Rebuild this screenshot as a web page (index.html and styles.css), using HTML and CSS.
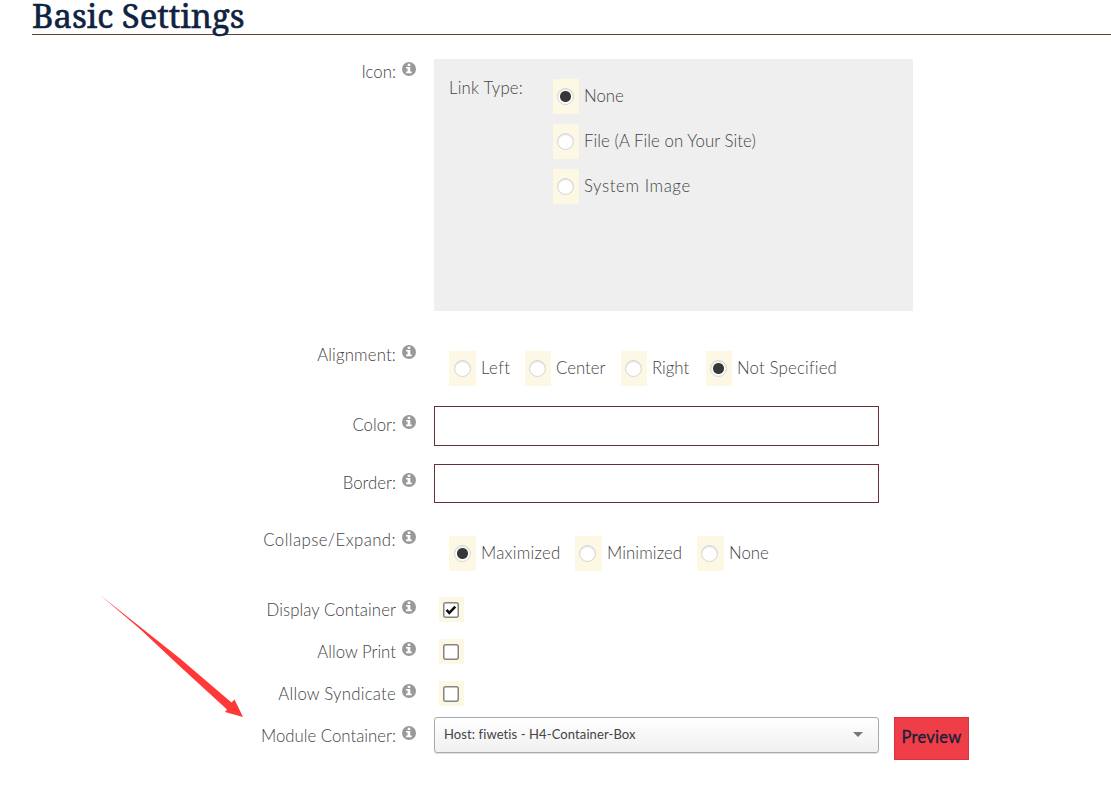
FILE: index.html
```html
<!DOCTYPE html>
<html lang="en">
<head>
<meta charset="utf-8">
<title>Basic Settings</title>
<link rel="stylesheet" href="styles.css">
</head>
<body>
<svg class="defs" width="0" height="0">
  <symbol id="info" viewBox="0 0 14 14"><circle cx="7" cy="7" r="7" fill="#999"/><path d="M5.7 1.8h2.6v2.3H5.7zM4 5h4.3v4.6h1.4v1.7H4V9.6h1.6V6.6H4z" fill="#fff"/></symbol>
</svg>
<h2 class="title"><span>Basic Settings</span></h2>
<form class="form">
  <div class="row row-icon">
    <div class="label"><span class="t-icon">Icon:</span><svg class="info"><use href="#info"/></svg></div>
    <div class="panel">
      <span class="link-type">Link Type:</span>
      <div class="stack">
        <label class="opt"><i class="tile"><b class="radio on"></b></i><span class="t-none">None</span></label>
        <label class="opt"><i class="tile"><b class="radio"></b></i><span class="t-file">File (A File on Your Site)</span></label>
        <label class="opt"><i class="tile"><b class="radio"></b></i><span class="t-system">System Image</span></label>
      </div>
    </div>
  </div>
  <div class="row row-align">
    <div class="label"><span class="t-alignment">Alignment:</span><svg class="info"><use href="#info"/></svg></div>
    <div class="options">
      <label class="opt w-left"><i class="tile"><b class="radio"></b></i><span class="t-left">Left</span></label>
      <label class="opt w-center"><i class="tile narrow"><b class="radio"></b></i><span class="t-center">Center</span></label>
      <label class="opt w-right"><i class="tile narrow"><b class="radio"></b></i><span class="t-right">Right</span></label>
      <label class="opt"><i class="tile narrow"><b class="radio on"></b></i><span class="t-not">Not Specified</span></label>
    </div>
  </div>
  <div class="row row-color">
    <div class="label low"><span class="t-color">Color:</span><svg class="info"><use href="#info"/></svg></div>
    <input class="field field-color" type="text">
  </div>
  <div class="row row-border">
    <div class="label low"><span class="t-border">Border:</span><svg class="info"><use href="#info"/></svg></div>
    <input class="field" type="text">
  </div>
  <div class="row row-collapse">
    <div class="label"><span class="t-collapse">Collapse/Expand:</span><svg class="info"><use href="#info"/></svg></div>
    <div class="options">
      <label class="opt w-max"><i class="tile"><b class="radio on"></b></i><span class="t-max">Maximized</span></label>
      <label class="opt w-min"><i class="tile shift"><b class="radio"></b></i><span class="t-min">Minimized</span></label>
      <label class="opt"><i class="tile shift"><b class="radio"></b></i><span class="t-none">None</span></label>
    </div>
  </div>
  <div class="row row-check">
    <div class="label"><span class="t-display">Display Container</span><svg class="info"><use href="#info"/></svg></div>
    <div class="check-tile"><svg class="check" viewBox="0 0 16 16"><rect x=".75" y=".75" width="14.5" height="14.5" rx="2" fill="#fff" stroke="#858585" stroke-width="1.5"/><path d="M3.5 7.8l2.8 3 6-6.1" fill="none" stroke="#111" stroke-width="2.6"/></svg></div>
  </div>
  <div class="row row-check">
    <div class="label"><span class="t-print">Allow Print</span><svg class="info"><use href="#info"/></svg></div>
    <div class="check-tile"><svg class="check" viewBox="0 0 16 16"><rect x=".75" y=".75" width="14.5" height="14.5" rx="2" fill="#fff" stroke="#858585" stroke-width="1.5"/></svg></div>
  </div>
  <div class="row row-syndicate">
    <div class="label"><span class="t-syndicate">Allow Syndicate</span><svg class="info"><use href="#info"/></svg></div>
    <div class="check-tile"><svg class="check" viewBox="0 0 16 16"><rect x=".75" y=".75" width="14.5" height="14.5" rx="2" fill="#fff" stroke="#858585" stroke-width="1.5"/></svg></div>
  </div>
  <div class="row">
    <div class="label low"><span class="t-module">Module Container:</span><svg class="info"><use href="#info"/></svg></div>
    <div class="select"><span class="t-host">Host: fiwetis - H4-Container-Box</span><svg class="caret" viewBox="0 0 10 5"><path d="M0 0h10L5 5z" fill="#777"/></svg></div>
    <button class="preview" type="button"><span>Preview</span></button>
  </div>
</form>
<svg class="arrow" viewBox="0 0 144 123"><path d="M0 0L80 63.5 131.5 107.5 134.5 104.5 143 122 125 117 127 114.5 80 71.500 40 34Z" fill="#ff3838"/></svg>
</body>
</html>
```
FILE: styles.css
```css
* { box-sizing: border-box; }
body { margin: 0; height: 791px; overflow: hidden; background: #fff; color: #444; font: 300 16.8px/24px Lato, "Open Sans", sans-serif; }
.defs { position: absolute; }
.title { margin: 0 0 24px 32px; height: 35px; border-bottom: 1px solid #673b36; color: #0f2341; font: 400 32.8px/32px "Noto Serif", "Liberation Serif", serif; white-space: nowrap; -webkit-text-stroke: .6px #0f2341; }
.row { display: flex; }
.row-icon { height: 283px; }
.row-align { height: 64px; }
.row-color { height: 58px; }
.row-border { height: 63px; }
.row-collapse { height: 70px; }
.row-check { height: 42px; }
.row-syndicate { height: 36px; }
.label { width: 416px; height: 24px; margin-right: 18px; display: flex; justify-content: flex-end; gap: 6px; flex: none; white-space: nowrap; }
.label span { line-height: 25px; }
.low { margin-top: 6px; }
.info { width: 14px; height: 14px; margin-top: 3px; flex: none; }
.panel { width: 479px; height: 252px; background: #efefef; display: flex; padding: 20px 0 0 15px; }
.link-type { width: 104px; margin-top: -4px; line-height: 25px; white-space: nowrap; letter-spacing: .18px; }
.stack { display: flex; flex-direction: column; gap: 10px; }
.opt { display: flex; gap: 5px; white-space: nowrap; flex: none; }
.opt span { line-height: 33px; }
.tile { width: 27px; height: 35px; background: #fcf8e3; display: flex; align-items: center; justify-content: center; flex: none; }
.stack .tile { width: 26px; padding-right: 1px; }
.narrow { width: 26px; padding-right: 1px; }
.shift { padding-right: 2px; }
.radio { width: 17px; height: 17px; border-radius: 50%; background: #fff; border: 1px solid #d4d4d8; box-shadow: inset 0 1px 1px #ddd; }
.on { background: radial-gradient(circle, #373737 0 5px, #fff 6px); }
.options { display: flex; padding: 9px 0 0 15px; }
.w-left { width: 76px; }
.w-center { width: 96px; }
.w-right { width: 85px; }
.w-max { width: 126px; }
.w-min { width: 122px; }
.t-system { letter-spacing: .6px; }
.opt .t-system { line-height: 34px; }
.t-file { letter-spacing: .07px; }
.t-alignment { letter-spacing: .15px; }
.t-collapse { letter-spacing: .42px; }
.t-left { letter-spacing: .4px; }
.t-not { letter-spacing: .17px; }
.t-max { letter-spacing: .25px; }
.t-min { letter-spacing: .1px; }
.t-display { letter-spacing: .08px; }
.t-syndicate { letter-spacing: .23px; }
.t-host { letter-spacing: .1px; }
.field { width: 445px; height: 39px; border: 1px solid #673035; padding: 0 8px; background: #fff; border-radius: 0; }
.field-color { height: 40px; }
.check-tile { width: 25px; height: 25px; margin-left: 5px; background: #fcf8e3; padding: 5px 0 0 4px; }
.check { width: 16px; height: 16px; display: block; }
.select { width: 445px; height: 36px; border: 1px solid #aaa; border-radius: 3px; background: linear-gradient(#fff, #f0f0f0); display: flex; justify-content: space-between; align-items: center; padding: 0 15px 2px 9px; color: #444; font-size: 13px; font-weight: 400; box-shadow: 0 1px 1px #ddd; }
.caret { width: 10px; height: 5px; }
.preview { width: 75px; height: 43px; margin-left: 15px; padding: 0 0 3px; border: 1px solid #d4363f; background: #ef3e48; color: #16203a; font: 400 16.5px Lato, sans-serif; letter-spacing: .25px; -webkit-text-stroke: .3px #16203a; }
.arrow { position: absolute; left: 100px; top: 595px; width: 144px; height: 123px; }
```
